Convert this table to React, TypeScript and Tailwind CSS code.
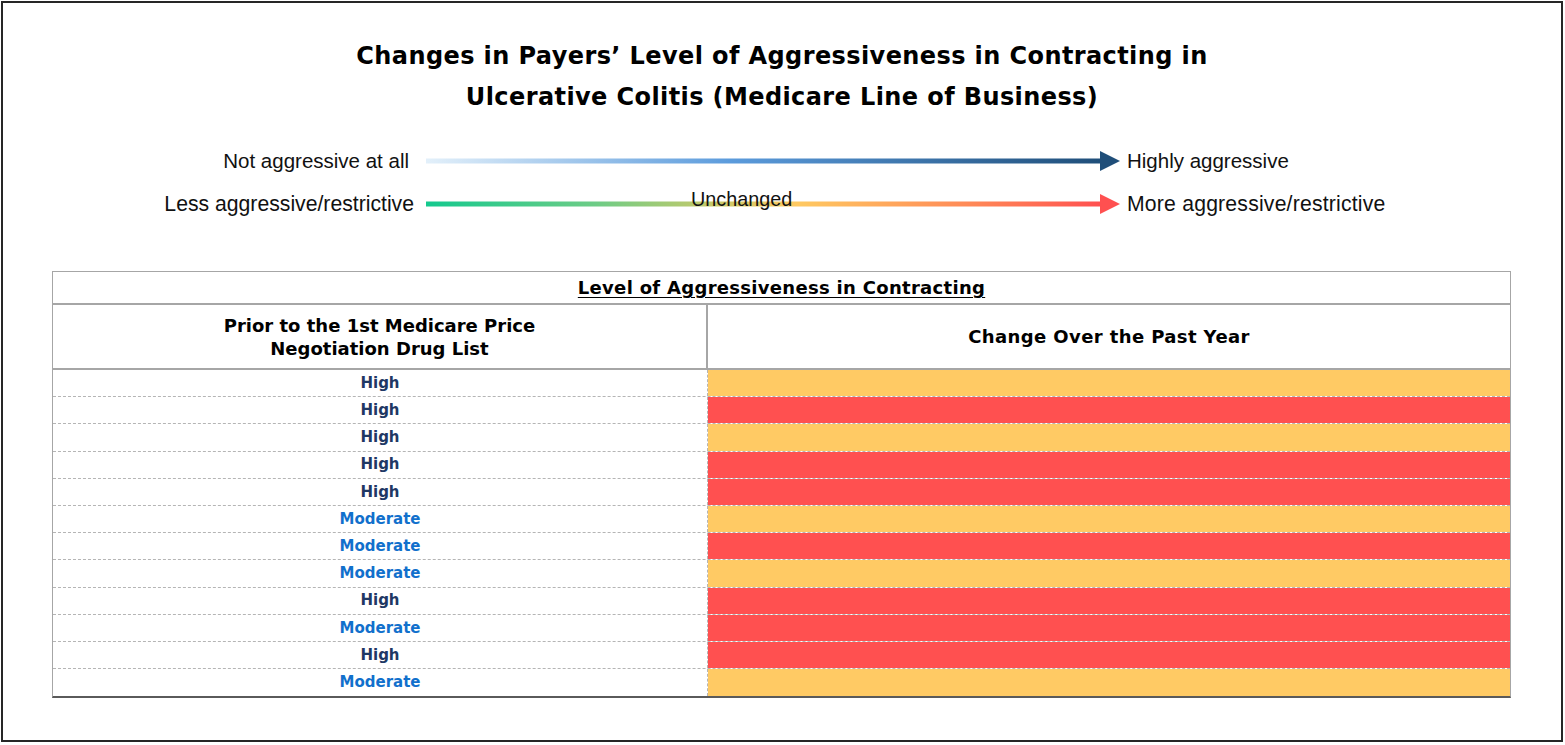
const rows: { level: 'High' | 'Moderate'; change: 'same' | 'more' }[] = [
  { level: 'High', change: 'same' },
  { level: 'High', change: 'more' },
  { level: 'High', change: 'same' },
  { level: 'High', change: 'more' },
  { level: 'High', change: 'more' },
  { level: 'Moderate', change: 'same' },
  { level: 'Moderate', change: 'more' },
  { level: 'Moderate', change: 'same' },
  { level: 'High', change: 'more' },
  { level: 'Moderate', change: 'more' },
  { level: 'High', change: 'more' },
  { level: 'Moderate', change: 'same' },
];

function Arrow({ id, stops, head }: { id: string; stops: [string, string][]; head: string }) {
  return (
    <svg width="695" height="24" viewBox="0 0 695 24" className="block">
      <defs>
        <linearGradient id={id} x1="0" y1="0" x2="1" y2="0">
          {stops.map(([o, c]) => (
            <stop key={o} offset={o} stopColor={c} />
          ))}
        </linearGradient>
      </defs>
      <rect x="0" y="9.5" width="676" height="5" fill={`url(#${id})`} />
      <polygon points="674,2 694,12 674,22" fill={head} />
    </svg>
  );
}

export default function App() {
  return (
    <div className="w-[1565px] h-[745px] bg-white pt-px pl-px" style={{ fontFamily: '"DejaVu Sans", Inter, sans-serif' }}>
      <div className="w-[1562px] h-[741px] border-2 border-[#262626] flex flex-col">
        {/* Title */}
        <h1 className="mt-[33px] text-center text-[24px] leading-[41px] font-bold text-black tracking-[0.4px]">
          Changes in Payers’ Level of Aggressiveness in Contracting in
          <br />
          Ulcerative Colitis (Medicare Line of Business)
        </h1>

        {/* Legend */}
        <div
          className="mt-[31px] flex flex-col gap-[19px] text-[20.5px] leading-[24px] text-[#111]"
          style={{ fontFamily: '"Liberation Sans", Arial, sans-serif' }}
        >
          <div className="flex items-center">
            <span className="w-[406px] text-right">Not aggressive at all</span>
            <span className="ml-[17px]">
              <Arrow
                id="blue"
                head="#1f4e79"
                stops={[
                  ['0', '#e3f0fa'],
                  ['0.45', '#5b9bdc'],
                  ['1', '#1f4e79'],
                ]}
              />
            </span>
            <span className="ml-[6px]">Highly aggressive</span>
          </div>
          <div className="flex items-center text-[21.2px]">
            <span className="w-[411px] text-right">Less aggressive/restrictive</span>
            <span className="ml-[12px] relative">
              <Arrow
                id="warm"
                head="#ff5050"
                stops={[
                  ['0', '#14c98e'],
                  ['0.25', '#6dcc86'],
                  ['0.42', '#c4c96a'],
                  ['0.55', '#ffc961'],
                  ['0.8', '#ff8a57'],
                  ['1', '#ff5050'],
                ]}
              />
              <span className="absolute left-[265px] top-[-5px] text-[19.8px]">Unchanged</span>
            </span>
            <span className="ml-[6px] tracking-[0.2px]">More aggressive/restrictive</span>
          </div>
        </div>

        {/* Table */}
        <div className="mt-[55px] ml-[49px] w-[1459px] border border-[#a6a6a6] border-b-2 border-b-[#5a5a5a]">
          <div className="h-[33px] flex items-center justify-center border-b-2 border-[#a6a6a6]">
            <span className="text-[18px] font-bold underline underline-offset-[3px] text-black tracking-[0.3px]">
              Level of Aggressiveness in Contracting
            </span>
          </div>
          <div className="h-[65px] flex border-b-2 border-[#a6a6a6]">
            <div className="w-[655px] flex items-center justify-center text-center text-[18px] leading-[23px] font-bold text-black border-r-2 border-[#a6a6a6]">
              Prior to the 1st Medicare Price
              <br />
              Negotiation Drug List
            </div>
            <div className="flex-1 flex items-center justify-center text-[18px] font-bold text-black tracking-[0.4px]">
              Change Over the Past Year
            </div>
          </div>
          {rows.map((r, i) => (
            <div
              key={i}
              className={`h-[27.2px] flex ${i < rows.length - 1 ? 'border-b border-dashed border-[#b5b5b5]' : ''}`}
            >
              <div
                className={`w-[655px] flex items-center justify-center text-[15px] font-bold border-r border-dashed border-[#b5b5b5] ${
                  r.level === 'High' ? 'text-[#1f3864]' : 'text-[#1170cc]'
                }`}
              >
                {r.level}
              </div>
              <div className={`flex-1 ${r.change === 'more' ? 'bg-[#ff5050]' : 'bg-[#ffca64]'}`} />
            </div>
          ))}
        </div>
      </div>
    </div>
  );
}
